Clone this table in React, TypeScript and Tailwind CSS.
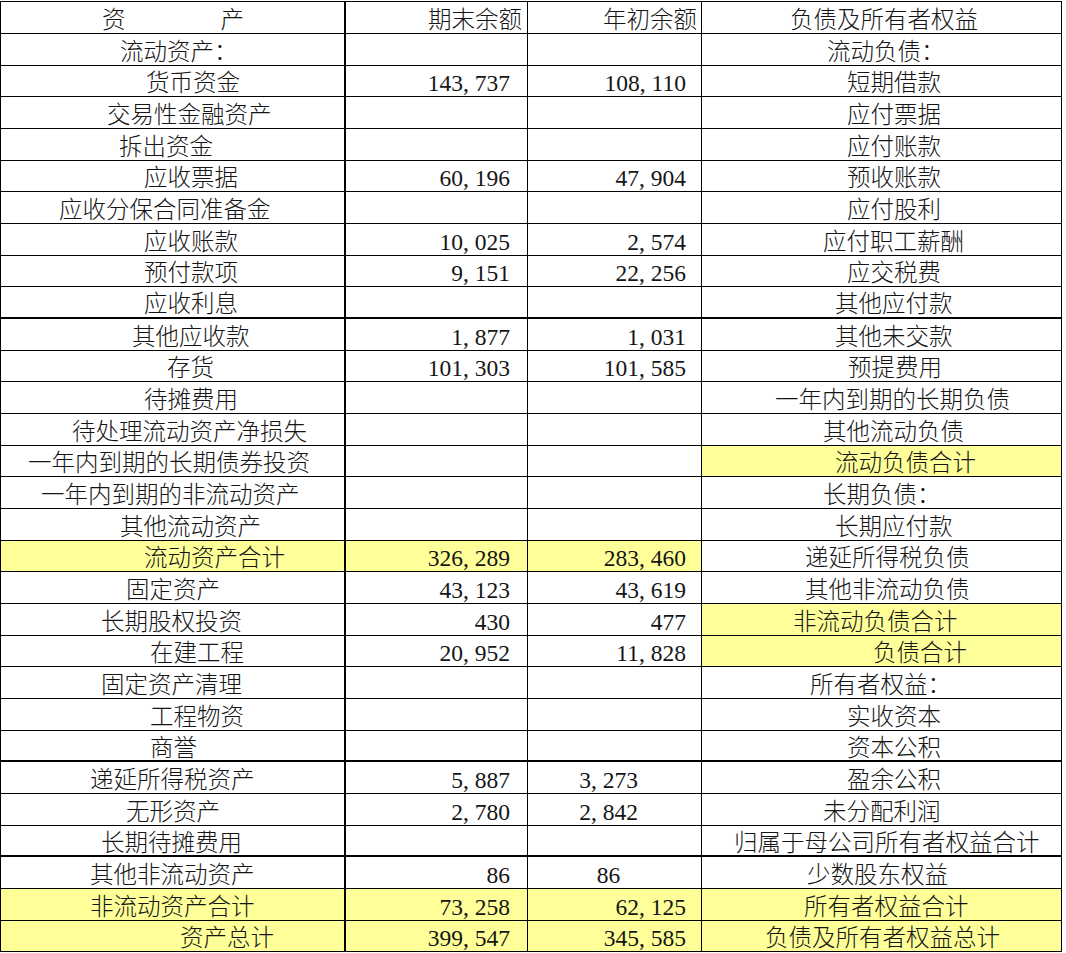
type Row = {
  a: string;
  ap: string;
  b?: string;
  c?: string;
  cc?: boolean;
  d: string;
  dp: string;
  ya?: boolean;
  yd?: boolean;
  thick?: boolean;
};

const ROWS: Row[] = [
  { a: '流动资产：', ap: 'pl-[119px]', d: '流动负债：', dp: 'pl-[125px]' },
  { a: '货币资金', ap: 'pl-[145px]', b: '143,737', c: '108,110', d: '短期借款', dp: 'pl-[145px]' },
  { a: '交易性金融资产', ap: 'pl-[106px]', d: '应付票据', dp: 'pl-[145px]' },
  { a: '拆出资金', ap: 'pl-[118px]', d: '应付账款', dp: 'pl-[145px]' },
  { a: '应收票据', ap: 'pl-[143px]', b: '60,196', c: '47,904', d: '预收账款', dp: 'pl-[145px]' },
  { a: '应收分保合同准备金', ap: 'pl-[58px]', d: '应付股利', dp: 'pl-[145px]' },
  { a: '应收账款', ap: 'pl-[143px]', b: '10,025', c: '2,574', d: '应付职工薪酬', dp: 'pl-[121px]' },
  { a: '预付款项', ap: 'pl-[143px]', b: '9,151', c: '22,256', d: '应交税费', dp: 'pl-[145px]' },
  { a: '应收利息', ap: 'pl-[143px]', d: '其他应付款', dp: 'pl-[133px]', thick: true },
  { a: '其他应收款', ap: 'pl-[131px]', b: '1,877', c: '1,031', d: '其他未交款', dp: 'pl-[133px]' },
  { a: '存货', ap: 'pl-[166px]', b: '101,303', c: '101,585', d: '预提费用', dp: 'pl-[146px]' },
  { a: '待摊费用', ap: 'pl-[143px]', d: '一年内到期的长期负债', dp: 'pl-[73px]' },
  { a: '待处理流动资产净损失', ap: 'pl-[71px]', d: '其他流动负债', dp: 'pl-[121px]' },
  { a: '一年内到期的长期债券投资', ap: 'pl-[27px]', d: '流动负债合计', dp: 'pl-[133px]', yd: true },
  { a: '一年内到期的非流动资产', ap: 'pl-[40px]', d: '长期负债：', dp: 'pl-[121px]' },
  { a: '其他流动资产', ap: 'pl-[119px]', d: '长期应付款', dp: 'pl-[133px]' },
  { a: '流动资产合计', ap: 'pl-[143px]', b: '326,289', c: '283,460', d: '递延所得税负债', dp: 'pl-[103px]', ya: true },
  { a: '固定资产', ap: 'pl-[125px]', b: '43,123', c: '43,619', d: '其他非流动负债', dp: 'pl-[103px]' },
  { a: '长期股权投资', ap: 'pl-[100px]', b: '430', c: '477', d: '非流动负债合计', dp: 'pl-[91px]', yd: true },
  { a: '在建工程', ap: 'pl-[149px]', b: '20,952', c: '11,828', d: '负债合计', dp: 'pl-[171px]', yd: true },
  { a: '固定资产清理', ap: 'pl-[100px]', d: '所有者权益：', dp: 'pl-[108px]' },
  { a: '工程物资', ap: 'pl-[149px]', d: '实收资本', dp: 'pl-[145px]' },
  { a: '商誉', ap: 'pl-[149px]', d: '资本公积', dp: 'pl-[145px]', thick: true },
  { a: '递延所得税资产', ap: 'pl-[89px]', b: '5,887', c: '3,273', cc: true, d: '盈余公积', dp: 'pl-[145px]' },
  { a: '无形资产', ap: 'pl-[125px]', b: '2,780', c: '2,842', cc: true, d: '未分配利润', dp: 'pl-[121px]' },
  { a: '长期待摊费用', ap: 'pl-[100px]', d: '归属于母公司所有者权益合计', dp: 'pl-[32px]', thick: true },
  { a: '其他非流动资产', ap: 'pl-[89px]', b: '86', c: '86', cc: true, d: '少数股东权益', dp: 'pl-[105px]' },
  { a: '非流动资产合计', ap: 'pl-[89px]', b: '73,258', c: '62,125', d: '所有者权益合计', dp: 'pl-[102px]', ya: true, yd: true },
  { a: '资产总计', ap: 'pl-[179px]', b: '399,547', c: '345,585', d: '负债及所有者权益总计', dp: 'pl-[63px]', ya: true, yd: true },
];

const cjk = "font-['Noto_Sans_CJK_SC',sans-serif] font-light text-[23.5px] leading-none whitespace-nowrap";
const num = "font-['Liberation_Serif','Noto_Sans_CJK_SC',serif] text-[23.5px] leading-none whitespace-nowrap";

function Num({ v }: { v: string }) {
  const parts = v.split(',');
  return (
    <span>
      {parts.map((p, i) => (
        <span key={i}>
          {p}
          {i < parts.length - 1 && <span className="inline-block w-[0.5em]">,</span>}
        </span>
      ))}
    </span>
  );
}

export default function App() {
  return (
    <div className="min-h-screen bg-white pt-px text-[#151515]">
      <div className="grid w-[1062px] grid-cols-[345px_182px_174px_360px] grid-rows-[repeat(10,32px_32px_31px)] border-l border-t border-black">
        {/* header */}
        <div className={`${cjk} flex items-center gap-[95px] border-b border-r-2 border-black pl-[101px] pt-[2px]`}>
          <span>资</span>
          <span>产</span>
        </div>
        <div className={`${cjk} flex items-center justify-end border-b border-r border-black pr-[5px] pt-[2px]`}>期末余额</div>
        <div className={`${cjk} flex items-center justify-end border-b border-r border-black pr-[4px] pt-[2px]`}>年初余额</div>
        <div className={`${cjk} flex items-center border-b border-r border-black pl-[88px] pt-[2px]`}>负债及所有者权益</div>

        {ROWS.map((r, i) => {
          const bb = r.thick ? 'border-b-2' : 'border-b';
          const ya = r.ya ? 'bg-[#ffff99]' : '';
          const yd = r.yd ? 'bg-[#ffff99]' : '';
          return [
            <div key={`${i}-a`} className={`${cjk} ${ya} ${r.ap} ${bb} flex items-center border-r-2 border-black pt-[2px]`}>
              {r.a}
            </div>,
            <div key={`${i}-b`} className={`${num} ${ya} ${bb} flex items-end justify-end border-r border-black pb-px pr-[17px]`}>
              {r.b && <Num v={r.b} />}
            </div>,
            <div
              key={`${i}-c`}
              className={`${num} ${ya} ${bb} flex items-end border-r border-black pb-px ${
                r.cc ? 'justify-center pr-[12px]' : 'justify-end pr-[15px]'
              }`}
            >
              {r.c && <Num v={r.c} />}
            </div>,
            <div key={`${i}-d`} className={`${cjk} ${yd} ${r.dp} ${bb} flex items-center border-r border-black pt-[2px]`}>
              {r.d}
            </div>,
          ];
        })}
      </div>
    </div>
  );
}
